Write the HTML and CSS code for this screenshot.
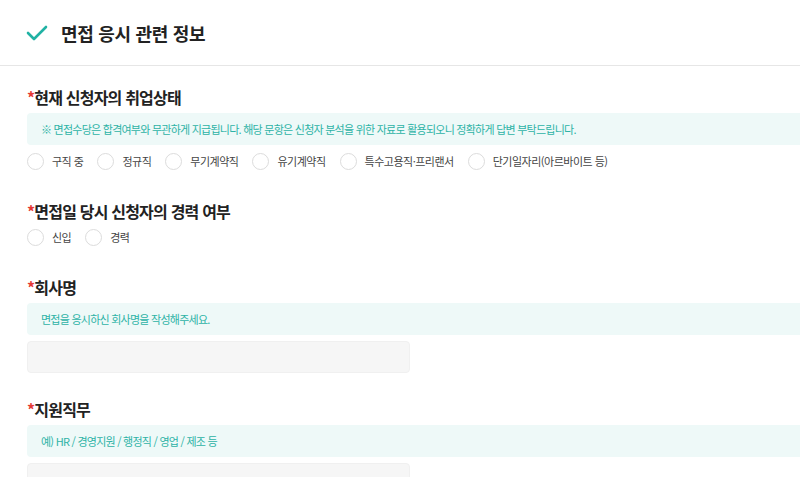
FILE: index.html
```html
<!DOCTYPE html>
<html lang="ko">
  <head>
    <meta charset="UTF-8" />
    <meta name="viewport" content="width=device-width, initial-scale=1.0" />
    <title>면접 응시 관련 정보</title>
    <link rel="stylesheet" href="styles.css">
  </head>
  <body>
    <div class="page">
      <div class="page-header">
        <svg class="check-icon" width="22" height="16" viewBox="0 0 22 16">
          <path d="M2 8 L8 14 L20 2" fill="none" stroke="#20b2a4" stroke-width="2.6" stroke-linecap="round" stroke-linejoin="round" />
        </svg>
        <h1>면접 응시 관련 정보</h1>
      </div>

      <div class="form">
        <div class="field">
          <h2><span class="req">*</span>현재 신청자의 취업상태</h2>
          <div class="notice">※ 면접수당은 합격여부와 무관하게 지급됩니다. 해당 문항은 신청자 분석을 위한 자료로 활용되오니 정확하게 답변 부탁드립니다.</div>
          <div class="radios">
            <label class="radio"><span class="circle"></span>구직 중</label>
            <label class="radio"><span class="circle"></span>정규직</label>
            <label class="radio"><span class="circle"></span>무기계약직</label>
            <label class="radio"><span class="circle"></span>유기계약직</label>
            <label class="radio"><span class="circle"></span>특수고용직·프리랜서</label>
            <label class="radio"><span class="circle"></span>단기일자리(아르바이트 등)</label>
          </div>
        </div>

        <div class="field">
          <h2><span class="req">*</span>면접일 당시 신청자의 경력 여부</h2>
          <div class="radios">
            <label class="radio"><span class="circle"></span>신입</label>
            <label class="radio"><span class="circle"></span>경력</label>
          </div>
        </div>

        <div class="field">
          <h2><span class="req">*</span>회사명</h2>
          <div class="notice">면접을 응시하신 회사명을 작성해주세요.</div>
          <input class="text-input" type="text" />
        </div>

        <div class="field">
          <h2><span class="req">*</span>지원직무</h2>
          <div class="notice">예) HR / 경영지원 / 행정직 / 영업 / 제조 등</div>
          <input class="text-input" type="text" />
        </div>
      </div>
    </div>
  </body>
</html>
```

FILE: styles.css
```css
body {
  margin: 0;
  font-family: "Noto Sans CJK KR", "Noto Sans", sans-serif;
  color: #222;
  background: #fff;
  overflow: hidden;
}
.page {
  width: 960px;
}
.page-header {
  display: flex;
  align-items: center;
  gap: 13px;
  height: 65px;
  padding: 0 26px;
  border-bottom: 1px solid #e6e6e6;
}
.page-header h1 {
  margin: 0;
  font-size: 18px;
  font-weight: 700;
  letter-spacing: -0.3px;
}
.form {
  display: flex;
  flex-direction: column;
  gap: 26px;
  padding: 21px 27px 0;
}
.field {
  display: flex;
  flex-direction: column;
  gap: 6px;
}
.field h2 {
  margin: 0;
  font-size: 16px;
  line-height: 20px;
  font-weight: 700;
  letter-spacing: -0.8px;
}
.req {
  color: #e53935;
}
.notice {
  height: 32px;
  line-height: 32px;
  padding: 0 14px;
  border-radius: 4px;
  background: #eef9f8;
  color: #2db3a6;
  font-size: 11px;
  letter-spacing: -0.75px;
}
.radios {
  display: flex;
  align-items: center;
  gap: 14px;
  height: 20px;
  margin-bottom: 4px;
}
.radio {
  display: flex;
  align-items: center;
  gap: 8px;
  font-size: 11px;
  letter-spacing: -0.5px;
  color: #444;
}
.circle {
  width: 15px;
  height: 15px;
  border: 1px solid #dcdcdc;
  border-radius: 50%;
  background: #fff;
}
.text-input {
  box-sizing: border-box;
  width: 383px;
  height: 32px;
  border: 1px solid #f0f0f0;
  border-radius: 4px;
  background: #f6f6f6;
  outline: none;
}
```
